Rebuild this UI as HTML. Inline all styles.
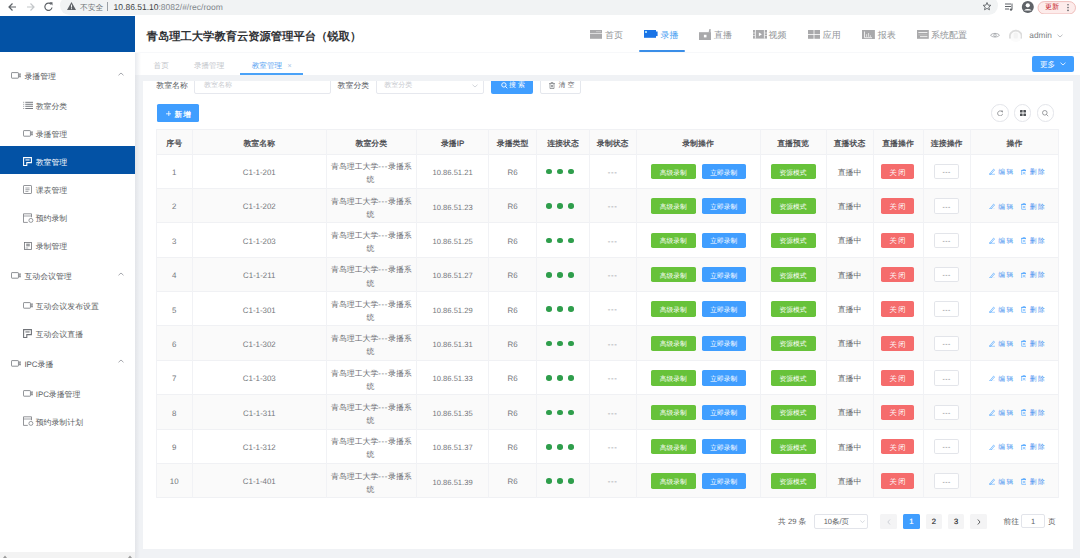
<!DOCTYPE html><html><head><meta charset="utf-8"><style>
*{box-sizing:border-box;margin:0;padding:0}
html,body{width:1080px;height:558px;overflow:hidden;background:#fff;font-family:"Liberation Sans",sans-serif;color:#606266;text-rendering:geometricPrecision}
.a{position:absolute}
.t{position:absolute;white-space:nowrap;line-height:1}
</style></head><body>
<div class="a" style="left:0.00px;top:0.00px;width:1080.00px;height:16.00px;background:#ffffff;"></div>
<div class="a" style="left:0.00px;top:15.50px;width:1080.00px;height:0.80px;background:#dfe1e5;"></div>
<div class="a" style="left:60.00px;top:-4.00px;width:938.00px;height:19.00px;background:#f1f3f4;border-radius:10px;"></div>
<svg class="a" style="left:7.00px;top:1.00px" width="50" height="12" viewBox="0 0 50 12"><path d="M9 6H2M5.5 2.5L2 6l3.5 3.5" stroke="#5f6368" stroke-width="1.2" fill="none"/><path d="M20 6h7M23.5 2.5L27 6l-3.5 3.5" stroke="#c4c7ca" stroke-width="1.2" fill="none"/><path d="M44 3.2A3.6 3.6 0 1 0 45 6.5" stroke="#5f6368" stroke-width="1.2" fill="none"/><path d="M42.3 1.2h3.2v3.2z" fill="#5f6368"/></svg>
<svg class="a" style="left:67.00px;top:2.00px" width="9" height="8" viewBox="0 0 9 8"><path d="M4.5 0L9 8H0z" fill="#5f6368"/><rect x="4" y="2.6" width="1" height="3" fill="#f1f3f4"/><rect x="4" y="6.2" width="1" height="1" fill="#f1f3f4"/></svg>
<div class="t" style="left:80.00px;top:3.83px;font-size:7.8px;color:#6f7377;">不安全</div>
<div class="a" style="left:107.00px;top:2.00px;width:0.80px;height:9.00px;background:#9aa0a6;"></div>
<div class="t" style="left:113.60px;top:3.14px;font-size:8.5px;color:#3c4043;">10.86.51.10<span style="color:#80868b">:8082/#/rec/room</span></div>
<svg class="a" style="left:982.00px;top:1.00px" width="95" height="13" viewBox="0 0 95 13"><path d="M5 1.5l1.1 2.6 2.8.2-2.1 1.8.7 2.7L5 7.4 2.5 8.8l.7-2.7L1.1 4.3l2.8-.2z" stroke="#5f6368" stroke-width="0.9" fill="none"/><path d="M23 3h6M23 5.5h6M23 8h4M30 2.5v6" stroke="#5f6368" stroke-width="1" fill="none"/><circle cx="29" cy="8.6" r="1.2" fill="#5f6368"/><circle cx="45.8" cy="6" r="6" fill="#5f6368"/><circle cx="45.8" cy="4.3" r="2.1" fill="#fff"/><path d="M42 9.5a4.5 3 0 0 1 7.6 0" fill="#fff"/><rect x="56" y="0.6" width="37.5" height="12.4" rx="6.2" fill="#fdeceb" stroke="#e8a7a3" stroke-width="0.7"/><circle cx="86" cy="3.8" r="0.8" fill="#5f6368"/><circle cx="86" cy="6.6" r="0.8" fill="#5f6368"/><circle cx="86" cy="9.4" r="0.8" fill="#5f6368"/></svg>
<div class="t" style="left:1045.00px;top:4.49px;font-size:7px;color:#c5221f;">更新</div>
<div class="a" style="left:0.00px;top:16.20px;width:135.00px;height:36.30px;background:#0352a5;"></div>
<div class="a" style="left:0.00px;top:52.50px;width:135.00px;height:505.50px;background:#fff;"></div>
<div class="a" style="left:0.00px;top:552.30px;width:135.00px;height:5.70px;background:#f3f3f3;"></div>
<svg class="a" style="left:0.00px;top:552.00px" width="135" height="6" viewBox="0 0 135 6"><path d="M3 6l2-2.6L7 6z" fill="#9a9a9a"/><path d="M128 6l2-2.6L132 6z" fill="#9a9a9a"/></svg>
<svg class="a" style="left:10.80px;top:71.80px" width="10.5" height="7" viewBox="0 0 10.5 7"><rect x="0.45" y="0.6" width="7" height="5.6" rx="0.6" fill="none" stroke="#707378" stroke-width="0.8"/><rect x="8.5" y="1.9" width="1.3" height="3" fill="none" stroke="#707378" stroke-width="0.6"/></svg>
<div class="t" style="left:24.40px;top:72.79px;font-size:7.9px;color:#55585d;">录播管理</div>
<svg class="a" style="left:117.50px;top:71.50px" width="6" height="4" viewBox="0 0 6 4"><path d="M0.5 3.3L3 1l2.5 2.3" fill="none" stroke="#909399" stroke-width="0.8"/></svg>
<svg class="a" style="left:22.80px;top:100.95px" width="10.5" height="9" viewBox="0 0 10.5 9"><path d="M0 1.3h1.2M0 3.3h1.2M0 5.3h1.2M0 7.5h1.2" stroke="#707378" stroke-width="0.6"/><path d="M2.3 1.3h8M2.3 3.3h8M2.3 5.3h8M2.3 7.5h8" stroke="#707378" stroke-width="0.95"/></svg>
<div class="t" style="left:35.70px;top:102.84px;font-size:7.9px;color:#5c5f64;">教室分类</div>
<svg class="a" style="left:22.80px;top:129.95px" width="10.5" height="7" viewBox="0 0 10.5 7"><rect x="0.45" y="0.6" width="7" height="5.6" rx="0.6" fill="none" stroke="#707378" stroke-width="0.8"/><rect x="8.5" y="1.9" width="1.3" height="3" fill="none" stroke="#707378" stroke-width="0.6"/></svg>
<div class="t" style="left:35.70px;top:130.94px;font-size:7.9px;color:#5c5f64;">录播管理</div>
<div class="a" style="left:0.00px;top:145.60px;width:135.00px;height:28.10px;background:#0352a5;"></div>
<svg class="a" style="left:22.80px;top:157.15px" width="9" height="9" viewBox="0 0 9 9"><path d="M0.6 0.6h7.8v5h-4.6v3H0.6z" fill="none" stroke="#ffffff" stroke-width="1.1"/><rect x="2.4" y="2.4" width="4.2" height="1.1" fill="#ffffff"/></svg>
<div class="t" style="left:35.70px;top:159.04px;font-size:7.9px;color:#ffffff;">教室管理</div>
<svg class="a" style="left:22.80px;top:185.25px" width="9" height="9" viewBox="0 0 9 9"><rect x="0.5" y="0.5" width="8" height="8" rx="0.6" fill="none" stroke="#707378" stroke-width="0.75"/><path d="M2.4 3h4.2M2.4 4.7h4.2M2.4 6.4h3" stroke="#707378" stroke-width="0.65"/></svg>
<div class="t" style="left:35.70px;top:187.14px;font-size:7.9px;color:#5c5f64;">课表管理</div>
<svg class="a" style="left:22.80px;top:212.85px" width="11" height="10" viewBox="0 0 11 10"><path d="M4.8 9.4H0.5v-8.6h8v3.4" fill="none" stroke="#707378" stroke-width="0.75"/><path d="M0.5 3h8" stroke="#707378" stroke-width="0.65"/><circle cx="7.9" cy="7.4" r="2" fill="none" stroke="#707378" stroke-width="0.7"/></svg>
<div class="t" style="left:35.70px;top:215.24px;font-size:7.9px;color:#5c5f64;">预约录制</div>
<svg class="a" style="left:23.60px;top:241.75px" width="8" height="8" viewBox="0 0 8 8"><rect x="0.45" y="0.45" width="7.1" height="7.1" fill="none" stroke="#707378" stroke-width="0.8"/><rect x="2.2" y="1.6" width="3.6" height="2.8" fill="#707378" opacity="0.7"/><path d="M1.6 6h2.6" stroke="#707378" stroke-width="0.6"/></svg>
<div class="t" style="left:35.70px;top:243.34px;font-size:7.9px;color:#5c5f64;">录制管理</div>
<svg class="a" style="left:10.80px;top:271.90px" width="10.5" height="7" viewBox="0 0 10.5 7"><rect x="0.45" y="0.6" width="7" height="5.6" rx="0.6" fill="none" stroke="#707378" stroke-width="0.8"/><rect x="8.5" y="1.9" width="1.3" height="3" fill="none" stroke="#707378" stroke-width="0.6"/></svg>
<div class="t" style="left:24.40px;top:272.89px;font-size:7.9px;color:#55585d;">互动会议管理</div>
<svg class="a" style="left:117.50px;top:271.60px" width="6" height="4" viewBox="0 0 6 4"><path d="M0.5 3.3L3 1l2.5 2.3" fill="none" stroke="#909399" stroke-width="0.8"/></svg>
<svg class="a" style="left:22.80px;top:301.95px" width="10.5" height="7" viewBox="0 0 10.5 7"><rect x="0.45" y="0.6" width="7" height="5.6" rx="0.6" fill="none" stroke="#707378" stroke-width="0.8"/><rect x="8.5" y="1.9" width="1.3" height="3" fill="none" stroke="#707378" stroke-width="0.6"/></svg>
<div class="t" style="left:35.70px;top:302.94px;font-size:7.9px;color:#5c5f64;">互动会议发布设置</div>
<svg class="a" style="left:22.80px;top:329.15px" width="9" height="9" viewBox="0 0 9 9"><path d="M0.6 0.6h7.8v5h-4.6v3H0.6z" fill="none" stroke="#707378" stroke-width="1.1"/><rect x="2.4" y="2.4" width="4.2" height="1.1" fill="#707378"/></svg>
<div class="t" style="left:35.70px;top:331.04px;font-size:7.9px;color:#5c5f64;">互动会议直播</div>
<svg class="a" style="left:10.80px;top:359.60px" width="10.5" height="7" viewBox="0 0 10.5 7"><rect x="0.45" y="0.6" width="7" height="5.6" rx="0.6" fill="none" stroke="#707378" stroke-width="0.8"/><rect x="8.5" y="1.9" width="1.3" height="3" fill="none" stroke="#707378" stroke-width="0.6"/></svg>
<div class="t" style="left:24.40px;top:360.59px;font-size:7.9px;color:#55585d;">IPC录播</div>
<svg class="a" style="left:117.50px;top:359.30px" width="6" height="4" viewBox="0 0 6 4"><path d="M0.5 3.3L3 1l2.5 2.3" fill="none" stroke="#909399" stroke-width="0.8"/></svg>
<svg class="a" style="left:22.80px;top:389.65px" width="10.5" height="7" viewBox="0 0 10.5 7"><rect x="0.45" y="0.6" width="7" height="5.6" rx="0.6" fill="none" stroke="#707378" stroke-width="0.8"/><rect x="8.5" y="1.9" width="1.3" height="3" fill="none" stroke="#707378" stroke-width="0.6"/></svg>
<div class="t" style="left:35.70px;top:390.64px;font-size:7.9px;color:#5c5f64;">IPC录播管理</div>
<svg class="a" style="left:22.80px;top:416.35px" width="11" height="10" viewBox="0 0 11 10"><path d="M4.8 9.4H0.5v-8.6h8v3.4" fill="none" stroke="#707378" stroke-width="0.75"/><path d="M0.5 3h8" stroke="#707378" stroke-width="0.65"/><circle cx="7.9" cy="7.4" r="2" fill="none" stroke="#707378" stroke-width="0.7"/></svg>
<div class="t" style="left:35.70px;top:418.74px;font-size:7.9px;color:#5c5f64;">预约录制计划</div>
<div class="a" style="left:135.00px;top:16.20px;width:945.00px;height:36.30px;background:#fff;"></div>
<div class="a" style="left:135.00px;top:52.20px;width:945.00px;height:0.80px;background:#f7f8fa;"></div>
<div class="t" style="left:146.60px;top:31.87px;font-size:11.3px;color:#2f3134;font-weight:bold;">青岛理工大学教育云资源管理平台（锐取）</div>
<svg class="a" style="left:590.00px;top:30.00px" width="12" height="8.8" viewBox="0 0 12 8.8"><rect width="12" height="8.8" fill="#a9a9ab"/><rect y="3" width="12" height="0.7" fill="#f4f4f4"/><rect x="6" y="1.2" width="5" height="0.9" fill="#c9c9c9"/></svg>
<div class="t" style="left:605.00px;top:30.83px;font-size:9px;color:#939699;">首页</div>
<svg class="a" style="left:644.00px;top:30.00px" width="13.6" height="7.8" viewBox="0 0 13.6 7.8"><rect width="12" height="7.8" fill="#1a74e6"/><rect x="11.8" y="1.5" width="1.8" height="4.6" fill="#1a74e6"/><rect x="1.1" y="1.1" width="1.8" height="1.8" fill="#bfefff"/></svg>
<div class="t" style="left:660.60px;top:30.83px;font-size:9px;color:#4b9ff2;">录播</div>
<svg class="a" style="left:699.00px;top:28.50px" width="12" height="11.2" viewBox="0 0 12 11.2"><rect x="0" y="3.2" width="12" height="8" fill="#a9a9ab"/><path d="M9.6 3.4L10.4 0h1.2v3.4z" fill="#a9a9ab"/><rect x="4.9" y="5.8" width="2.6" height="2.6" fill="#fff"/></svg>
<div class="t" style="left:714.00px;top:30.83px;font-size:9px;color:#939699;">直播</div>
<svg class="a" style="left:752.90px;top:30.00px" width="14.3" height="8.6" viewBox="0 0 14.3 8.6"><rect width="14.3" height="8.6" fill="#a9a9ab"/><path d="M2.4 0v8.6M11.4 0v8.6" stroke="#fff" stroke-width="0.8"/><path d="M0 3h2.2M0 5.5h2.2M11.6 3h2.7M11.6 5.5h2.7" stroke="#fff" stroke-width="0.6"/><path d="M5.9 2.4l3 1.9-3 1.9z" fill="#fff"/></svg>
<div class="t" style="left:768.60px;top:30.83px;font-size:9px;color:#939699;">视频</div>
<svg class="a" style="left:808.30px;top:30.00px" width="12" height="8.8" viewBox="0 0 12 8.8"><rect width="5.6" height="4" fill="#a9a9ab"/><rect x="6.4" width="5.6" height="4" fill="#a9a9ab"/><rect y="4.8" width="5.6" height="4" fill="#a9a9ab"/><rect x="6.4" y="4.8" width="5.6" height="4" fill="#a9a9ab"/></svg>
<div class="t" style="left:822.80px;top:30.83px;font-size:9px;color:#939699;">应用</div>
<svg class="a" style="left:862.00px;top:29.70px" width="12.9" height="9" viewBox="0 0 12.9 9"><rect width="12.9" height="9" fill="#a9a9ab"/><path d="M2.5 1.5v6.2h7.5" stroke="#fff" stroke-width="0.8" fill="none"/><path d="M4.6 6.8V4.2M6.6 6.8V3M8.4 6.8V5.3" stroke="#f2f2f2" stroke-width="0.8"/></svg>
<div class="t" style="left:877.80px;top:30.83px;font-size:9px;color:#939699;">报表</div>
<svg class="a" style="left:917.00px;top:30.00px" width="11.8" height="8.8" viewBox="0 0 11.8 8.8"><rect width="11.8" height="8.8" fill="#a9a9ab"/><rect x="1.4" y="2.2" width="9" height="0.8" fill="#fff"/><rect x="3" y="6.3" width="7.4" height="0.8" fill="#fff"/><rect x="1.4" y="3.9" width="9" height="1.6" fill="#b9b9b9"/></svg>
<div class="t" style="left:931.00px;top:30.83px;font-size:9px;color:#939699;">系统配置</div>
<div class="a" style="left:639.00px;top:50.00px;width:46.00px;height:2.00px;background:#3a8ee8;border-radius:1px;"></div>
<svg class="a" style="left:989.80px;top:31.50px" width="10" height="6.5" viewBox="0 0 10 6.5"><path d="M0.5 3.2C2 0.8 8 0.8 9.5 3.2 8 5.6 2 5.6 0.5 3.2z" fill="none" stroke="#9a9da2" stroke-width="0.8"/><circle cx="5" cy="3.2" r="1.3" fill="none" stroke="#9a9da2" stroke-width="0.7"/></svg>
<svg class="a" style="left:1008.70px;top:28.60px" width="13.5" height="13.5" viewBox="0 0 13.5 13.5"><circle cx="6.75" cy="6.75" r="6.2" fill="#fbfbfb"/><path d="M1.2 9.5A5.9 5.9 0 1 1 12.3 9.5" fill="none" stroke="#dcdcdc" stroke-width="1.8"/><rect x="4.6" y="3.5" width="4.3" height="6" rx="1.5" fill="#f3f3f3"/></svg>
<div class="t" style="left:1029.30px;top:31.11px;font-size:8.3px;color:#7c7f84;">admin</div>
<svg class="a" style="left:1056.80px;top:33.60px" width="6" height="4" viewBox="0 0 6 4"><path d="M0.5 0.7L3 3l2.5-2.3" fill="none" stroke="#a0a3a8" stroke-width="0.7"/></svg>
<div class="a" style="left:135.00px;top:53.00px;width:945.00px;height:22.00px;background:#fff;"></div>
<div class="a" style="left:135.00px;top:53.00px;width:6.00px;height:22.00px;background:linear-gradient(90deg,#e9ebef,#f4f5f7 50%,#fff);"></div>
<div class="t" style="left:153.60px;top:61.69px;font-size:7.6px;color:#c3c6cb;">首页</div>
<div class="t" style="left:193.90px;top:61.69px;font-size:7.6px;color:#c3c6cb;">录播管理</div>
<div class="t" style="left:251.70px;top:61.69px;font-size:7.6px;color:#5ea6f2;">教室管理</div>
<div class="t" style="left:287.40px;top:63.28px;font-size:7px;color:#a9c3e6;">×</div>
<div class="a" style="left:240.00px;top:73.40px;width:63.00px;height:1.60px;background:#4aa2f8;"></div>
<div class="a" style="left:1032.00px;top:56.00px;width:41.80px;height:15.80px;background:#409eff;border-radius:2px;"></div>
<div class="t" style="left:1040.00px;top:61.49px;font-size:7.6px;color:#ffffff;">更多</div>
<svg class="a" style="left:1059.50px;top:62.30px" width="6" height="4" viewBox="0 0 6 4"><path d="M0.5 0.7L3 3l2.5-2.3" fill="none" stroke="#fff" stroke-width="0.8"/></svg>
<div class="a" style="left:135.00px;top:75.00px;width:945.00px;height:483.00px;background:#f0f2f5;"></div>
<div class="a" style="left:135.00px;top:75.00px;width:5.00px;height:483.00px;background:linear-gradient(90deg,#e3e5e9,#f0f2f5);"></div>
<div class="a" style="left:142.50px;top:80.60px;width:930.50px;height:468.00px;background:#fff;"></div>
<div class="a" style="left:142.5px;top:80.8px;width:931px;height:467px;overflow:hidden">
<div class="t" style="left:13.80px;top:0.99px;font-size:7.9px;color:#55585d;">教室名称</div>
<div class="a" style="left:51.50px;top:-4.80px;width:137.20px;height:17.50px;background:#fff;border:1px solid #e6e8ee;border-radius:2px;"></div>
<div class="t" style="left:61.50px;top:1.69px;font-size:7.0px;color:#c8cacf;">教室名称</div>
<div class="t" style="left:195.10px;top:0.99px;font-size:7.9px;color:#55585d;">教室分类</div>
<div class="a" style="left:233.20px;top:-4.80px;width:108.30px;height:17.50px;background:#fff;border:1px solid #e6e8ee;border-radius:2px;"></div>
<div class="t" style="left:241.80px;top:1.69px;font-size:7.0px;color:#c8cacf;">教室分类</div>
<svg class="a" style="left:329.80px;top:2.80px" width="6" height="4" viewBox="0 0 6 4"><path d="M0.5 0.7L3 3l2.5-2.3" fill="none" stroke="#c0c4cc" stroke-width="0.7"/></svg>
<div class="a" style="left:348.00px;top:-4.60px;width:42.30px;height:17.80px;background:#409eff;border-radius:2px;"></div>
<svg class="a" style="left:358.00px;top:1.20px" width="7" height="7" viewBox="0 0 7 7"><circle cx="2.9" cy="2.9" r="2.2" fill="none" stroke="#fff" stroke-width="0.9"/><path d="M4.5 4.5L6.3 6.3" stroke="#fff" stroke-width="0.9"/></svg>
<div class="t" style="left:366.50px;top:2.42px;font-size:6.9px;color:#ffffff;letter-spacing:2.2px;">搜索</div>
<div class="a" style="left:397.50px;top:-4.60px;width:41.00px;height:17.80px;background:#fff;border:1px solid #e4e7ed;border-radius:2px;"></div>
<svg class="a" style="left:406.80px;top:1.20px" width="6" height="7" viewBox="0 0 6 7"><path d="M0 1.6h6M2 1.6V0.6h2v1M1 1.6v4.9h4V1.6M2.5 3v2.3M3.5 3v2.3" fill="none" stroke="#6c6f74" stroke-width="0.65"/></svg>
<div class="t" style="left:416.00px;top:2.42px;font-size:6.9px;color:#606266;letter-spacing:2.2px;">清空</div>
<div class="a" style="left:14.30px;top:23.50px;width:42.00px;height:17.80px;background:#409eff;border-radius:1.6px;"></div>
<svg class="a" style="left:23.10px;top:30.10px" width="5.6" height="5.6" viewBox="0 0 5.6 5.6"><path d="M2.8 0v5.6M0 2.8h5.6" stroke="#fff" stroke-width="0.8"/></svg>
<div class="t" style="left:31.90px;top:30.29px;font-size:7.6px;color:#ffffff;font-weight:bold;letter-spacing:1.2px;">新增</div>
<div class="a" style="left:848.90px;top:23.70px;width:17.40px;height:17.40px;background:#fff;border:1px solid #e3e5ea;border-radius:50%;"></div>
<svg class="a" style="left:854.40px;top:29.20px" width="6.4" height="6.4" viewBox="0 0 6.4 6.4"><path d="M5.3 2.2A2.5 2.5 0 1 0 5.6 3.8" fill="none" stroke="#6a6d72" stroke-width="0.65"/><path d="M4.2 0.9h1.4v1.4" fill="none" stroke="#6a6d72" stroke-width="0.65"/></svg>
<div class="a" style="left:871.30px;top:23.70px;width:17.40px;height:17.40px;background:#fff;border:1px solid #e3e5ea;border-radius:50%;"></div>
<svg class="a" style="left:877.00px;top:29.40px" width="6" height="6" viewBox="0 0 6 6"><rect width="2.6" height="2.6" rx="0.5" fill="#4f5256"/><rect x="3.4" width="2.6" height="2.6" rx="0.5" fill="#4f5256"/><rect y="3.4" width="2.6" height="2.6" rx="0.5" fill="#4f5256"/><rect x="3.4" y="3.4" width="2.6" height="2.6" rx="0.5" fill="#4f5256"/></svg>
<div class="a" style="left:894.00px;top:23.70px;width:17.40px;height:17.40px;background:#fff;border:1px solid #e3e5ea;border-radius:50%;"></div>
<svg class="a" style="left:899.70px;top:29.40px" width="6.5" height="6.5" viewBox="0 0 6.5 6.5"><circle cx="2.8" cy="2.8" r="2.3" fill="none" stroke="#6a6d72" stroke-width="0.65"/><path d="M4.5 4.5L6.2 6.2" stroke="#6a6d72" stroke-width="0.65"/></svg>
<div class="a" style="left:13.50px;top:48.70px;width:902.50px;height:24.60px;background:#fafafa;"></div>
<div class="a" style="left:13.50px;top:73.30px;width:902.50px;height:34.38px;background:#ffffff;"></div>
<div class="a" style="left:13.50px;top:107.68px;width:902.50px;height:34.38px;background:#fafafa;"></div>
<div class="a" style="left:13.50px;top:142.06px;width:902.50px;height:34.38px;background:#ffffff;"></div>
<div class="a" style="left:13.50px;top:176.44px;width:902.50px;height:34.38px;background:#fafafa;"></div>
<div class="a" style="left:13.50px;top:210.82px;width:902.50px;height:34.38px;background:#ffffff;"></div>
<div class="a" style="left:13.50px;top:245.20px;width:902.50px;height:34.38px;background:#fafafa;"></div>
<div class="a" style="left:13.50px;top:279.58px;width:902.50px;height:34.38px;background:#ffffff;"></div>
<div class="a" style="left:13.50px;top:313.96px;width:902.50px;height:34.38px;background:#fafafa;"></div>
<div class="a" style="left:13.50px;top:348.34px;width:902.50px;height:34.38px;background:#ffffff;"></div>
<div class="a" style="left:13.50px;top:382.72px;width:902.50px;height:34.38px;background:#fafafa;"></div>
<div class="a" style="left:13.50px;top:48.20px;width:902.50px;height:1.00px;background:#f0f1f4;"></div>
<div class="a" style="left:13.50px;top:72.80px;width:902.50px;height:1.00px;background:#f0f1f4;"></div>
<div class="a" style="left:13.50px;top:107.18px;width:902.50px;height:1.00px;background:#f0f1f4;"></div>
<div class="a" style="left:13.50px;top:141.56px;width:902.50px;height:1.00px;background:#f0f1f4;"></div>
<div class="a" style="left:13.50px;top:175.94px;width:902.50px;height:1.00px;background:#f0f1f4;"></div>
<div class="a" style="left:13.50px;top:210.32px;width:902.50px;height:1.00px;background:#f0f1f4;"></div>
<div class="a" style="left:13.50px;top:244.70px;width:902.50px;height:1.00px;background:#f0f1f4;"></div>
<div class="a" style="left:13.50px;top:279.08px;width:902.50px;height:1.00px;background:#f0f1f4;"></div>
<div class="a" style="left:13.50px;top:313.46px;width:902.50px;height:1.00px;background:#f0f1f4;"></div>
<div class="a" style="left:13.50px;top:347.84px;width:902.50px;height:1.00px;background:#f0f1f4;"></div>
<div class="a" style="left:13.50px;top:382.22px;width:902.50px;height:1.00px;background:#f0f1f4;"></div>
<div class="a" style="left:13.50px;top:416.60px;width:902.50px;height:1.00px;background:#f0f1f4;"></div>
<div class="a" style="left:13.00px;top:48.70px;width:1.00px;height:368.40px;background:#f1f2f5;"></div>
<div class="a" style="left:49.50px;top:48.70px;width:1.00px;height:368.40px;background:#f1f2f5;"></div>
<div class="a" style="left:183.00px;top:48.70px;width:1.00px;height:368.40px;background:#f1f2f5;"></div>
<div class="a" style="left:273.70px;top:48.70px;width:1.00px;height:368.40px;background:#f1f2f5;"></div>
<div class="a" style="left:345.50px;top:48.70px;width:1.00px;height:368.40px;background:#f1f2f5;"></div>
<div class="a" style="left:393.70px;top:48.70px;width:1.00px;height:368.40px;background:#f1f2f5;"></div>
<div class="a" style="left:446.30px;top:48.70px;width:1.00px;height:368.40px;background:#f1f2f5;"></div>
<div class="a" style="left:493.00px;top:48.70px;width:1.00px;height:368.40px;background:#f1f2f5;"></div>
<div class="a" style="left:617.00px;top:48.70px;width:1.00px;height:368.40px;background:#f1f2f5;"></div>
<div class="a" style="left:683.00px;top:48.70px;width:1.00px;height:368.40px;background:#f1f2f5;"></div>
<div class="a" style="left:730.00px;top:48.70px;width:1.00px;height:368.40px;background:#f1f2f5;"></div>
<div class="a" style="left:780.00px;top:48.70px;width:1.00px;height:368.40px;background:#f1f2f5;"></div>
<div class="a" style="left:827.30px;top:48.70px;width:1.00px;height:368.40px;background:#f1f2f5;"></div>
<div class="a" style="left:915.50px;top:48.70px;width:1.00px;height:368.40px;background:#f1f2f5;"></div>
<div class="t" style="left:13.50px;top:58.99px;font-size:7.9px;color:#3f4247;width:36.50px;text-align:center;font-weight:500;-webkit-text-stroke:0.25px #3f4247;">序号</div>
<div class="t" style="left:50.00px;top:58.99px;font-size:7.9px;color:#3f4247;width:133.50px;text-align:center;font-weight:500;-webkit-text-stroke:0.25px #3f4247;">教室名称</div>
<div class="t" style="left:183.50px;top:58.99px;font-size:7.9px;color:#3f4247;width:90.70px;text-align:center;font-weight:500;-webkit-text-stroke:0.25px #3f4247;">教室分类</div>
<div class="t" style="left:274.20px;top:58.99px;font-size:7.9px;color:#3f4247;width:71.80px;text-align:center;font-weight:500;-webkit-text-stroke:0.25px #3f4247;">录播IP</div>
<div class="t" style="left:346.00px;top:58.99px;font-size:7.9px;color:#3f4247;width:48.20px;text-align:center;font-weight:500;-webkit-text-stroke:0.25px #3f4247;">录播类型</div>
<div class="t" style="left:394.20px;top:58.99px;font-size:7.9px;color:#3f4247;width:52.60px;text-align:center;font-weight:500;-webkit-text-stroke:0.25px #3f4247;">连接状态</div>
<div class="t" style="left:446.80px;top:58.99px;font-size:7.9px;color:#3f4247;width:46.70px;text-align:center;font-weight:500;-webkit-text-stroke:0.25px #3f4247;">录制状态</div>
<div class="t" style="left:493.50px;top:58.99px;font-size:7.9px;color:#3f4247;width:124.00px;text-align:center;font-weight:500;-webkit-text-stroke:0.25px #3f4247;">录制操作</div>
<div class="t" style="left:617.50px;top:58.99px;font-size:7.9px;color:#3f4247;width:66.00px;text-align:center;font-weight:500;-webkit-text-stroke:0.25px #3f4247;">直播预览</div>
<div class="t" style="left:683.50px;top:58.99px;font-size:7.9px;color:#3f4247;width:47.00px;text-align:center;font-weight:500;-webkit-text-stroke:0.25px #3f4247;">直播状态</div>
<div class="t" style="left:730.50px;top:58.99px;font-size:7.9px;color:#3f4247;width:50.00px;text-align:center;font-weight:500;-webkit-text-stroke:0.25px #3f4247;">直播操作</div>
<div class="t" style="left:780.50px;top:58.99px;font-size:7.9px;color:#3f4247;width:47.30px;text-align:center;font-weight:500;-webkit-text-stroke:0.25px #3f4247;">连接操作</div>
<div class="t" style="left:827.80px;top:58.99px;font-size:7.9px;color:#3f4247;width:88.20px;text-align:center;font-weight:500;-webkit-text-stroke:0.25px #3f4247;">操作</div>
<div class="t" style="left:13.50px;top:88.25px;font-size:7.9px;color:#74777c;width:36.50px;text-align:center;">1</div>
<div class="t" style="left:50.00px;top:88.25px;font-size:7.9px;color:#74777c;width:133.50px;text-align:center;">C1-1-201</div>
<div class="a" style="left:183.50px;top:79.43px;width:90.70px;text-align:center;font-size:7.9px;line-height:13.2px;color:#6a6d72">青岛理工大学<span style="letter-spacing:0.6px">---</span>录播系<br><span style="position:relative;left:-1px">统</span></div>
<div class="t" style="left:274.20px;top:88.35px;font-size:7.6px;color:#74777c;width:71.80px;text-align:center;">10.86.51.21</div>
<div class="t" style="left:346.00px;top:88.25px;font-size:7.9px;color:#74777c;width:48.20px;text-align:center;">R6</div>
<div class="a" style="left:403.60px;top:88.09px;width:5.60px;height:5.60px;background:#2f9e4c;border-radius:50%;"></div>
<div class="a" style="left:414.70px;top:88.09px;width:5.60px;height:5.60px;background:#2f9e4c;border-radius:50%;"></div>
<div class="a" style="left:425.80px;top:88.09px;width:5.60px;height:5.60px;background:#2f9e4c;border-radius:50%;"></div>
<div class="t" style="left:446.80px;top:88.05px;font-size:7.9px;color:#8d9095;width:46.70px;text-align:center;letter-spacing:0.6px;">---</div>
<div class="a" style="left:508.60px;top:83.09px;width:44.50px;height:15.40px;background:#67c23a;border-radius:1.8px;"></div>
<div class="t" style="left:508.60px;top:89.76px;font-size:6.75px;color:#fff;width:44.50px;text-align:center;">高级录制</div>
<div class="a" style="left:559.10px;top:83.09px;width:44.40px;height:15.40px;background:#409eff;border-radius:1.8px;"></div>
<div class="t" style="left:559.10px;top:89.76px;font-size:6.75px;color:#fff;width:44.40px;text-align:center;">立即录制</div>
<div class="a" style="left:628.10px;top:83.09px;width:45.00px;height:15.40px;background:#67c23a;border-radius:1.8px;"></div>
<div class="t" style="left:628.10px;top:89.76px;font-size:6.75px;color:#fff;width:45.00px;text-align:center;">资源模式</div>
<div class="t" style="left:683.50px;top:87.78px;font-size:7.9px;color:#606266;width:47.00px;text-align:center;">直播中</div>
<div class="a" style="left:738.30px;top:83.09px;width:33.40px;height:15.40px;background:#f56c6c;border-radius:1.8px;"></div>
<div class="t" style="left:738.30px;top:87.88px;font-size:7.3px;color:#fff;width:33.40px;text-align:center;letter-spacing:1.5px;text-indent:1.5px;">关闭</div>
<div class="a" style="left:791.10px;top:83.09px;width:25.80px;height:15.40px;background:#fff;border-radius:1.8px;border:1px solid #e3e5ea;"></div>
<div class="t" style="left:791.10px;top:89.56px;font-size:6.75px;color:#6e7176;width:25.80px;text-align:center;letter-spacing:0.5px;text-indent:0.5px;">---</div>
<svg class="a" style="left:846.30px;top:87.69px" width="6" height="6.6" viewBox="0 0 6 6.6"><path d="M1 5.4L4.6 1.1l1 0.8L2 6.1H0.6z" fill="none" stroke="#409eff" stroke-width="0.6"/><path d="M0 6.3h6" stroke="#409eff" stroke-width="0.5"/></svg>
<div class="t" style="left:855.70px;top:89.46px;font-size:6.75px;color:#4a94f0;letter-spacing:1.55px;">编辑</div>
<svg class="a" style="left:878.30px;top:87.79px" width="5.6" height="6.6" viewBox="0 0 5.6 6.6"><rect x="0.8" y="1.6" width="4.4" height="4.6" fill="none" stroke="#409eff" stroke-width="0.6"/><path d="M0 1.4h6M2 1.4V0.4h2v1M2.4 3v2M3.6 3v2" fill="none" stroke="#409eff" stroke-width="0.55"/></svg>
<div class="t" style="left:887.30px;top:89.46px;font-size:6.75px;color:#4a94f0;letter-spacing:1.55px;">删除</div>
<div class="t" style="left:13.50px;top:122.63px;font-size:7.9px;color:#74777c;width:36.50px;text-align:center;">2</div>
<div class="t" style="left:50.00px;top:122.63px;font-size:7.9px;color:#74777c;width:133.50px;text-align:center;">C1-1-202</div>
<div class="a" style="left:183.50px;top:113.81px;width:90.70px;text-align:center;font-size:7.9px;line-height:13.2px;color:#6a6d72">青岛理工大学<span style="letter-spacing:0.6px">---</span>录播系<br><span style="position:relative;left:-1px">统</span></div>
<div class="t" style="left:274.20px;top:122.73px;font-size:7.6px;color:#74777c;width:71.80px;text-align:center;">10.86.51.23</div>
<div class="t" style="left:346.00px;top:122.63px;font-size:7.9px;color:#74777c;width:48.20px;text-align:center;">R6</div>
<div class="a" style="left:403.60px;top:122.47px;width:5.60px;height:5.60px;background:#2f9e4c;border-radius:50%;"></div>
<div class="a" style="left:414.70px;top:122.47px;width:5.60px;height:5.60px;background:#2f9e4c;border-radius:50%;"></div>
<div class="a" style="left:425.80px;top:122.47px;width:5.60px;height:5.60px;background:#2f9e4c;border-radius:50%;"></div>
<div class="t" style="left:446.80px;top:122.43px;font-size:7.9px;color:#8d9095;width:46.70px;text-align:center;letter-spacing:0.6px;">---</div>
<div class="a" style="left:508.60px;top:117.47px;width:44.50px;height:15.40px;background:#67c23a;border-radius:1.8px;"></div>
<div class="t" style="left:508.60px;top:124.14px;font-size:6.75px;color:#fff;width:44.50px;text-align:center;">高级录制</div>
<div class="a" style="left:559.10px;top:117.47px;width:44.40px;height:15.40px;background:#409eff;border-radius:1.8px;"></div>
<div class="t" style="left:559.10px;top:124.14px;font-size:6.75px;color:#fff;width:44.40px;text-align:center;">立即录制</div>
<div class="a" style="left:628.10px;top:117.47px;width:45.00px;height:15.40px;background:#67c23a;border-radius:1.8px;"></div>
<div class="t" style="left:628.10px;top:124.14px;font-size:6.75px;color:#fff;width:45.00px;text-align:center;">资源模式</div>
<div class="t" style="left:683.50px;top:122.16px;font-size:7.9px;color:#606266;width:47.00px;text-align:center;">直播中</div>
<div class="a" style="left:738.30px;top:117.47px;width:33.40px;height:15.40px;background:#f56c6c;border-radius:1.8px;"></div>
<div class="t" style="left:738.30px;top:122.26px;font-size:7.3px;color:#fff;width:33.40px;text-align:center;letter-spacing:1.5px;text-indent:1.5px;">关闭</div>
<div class="a" style="left:791.10px;top:117.47px;width:25.80px;height:15.40px;background:#fff;border-radius:1.8px;border:1px solid #e3e5ea;"></div>
<div class="t" style="left:791.10px;top:123.94px;font-size:6.75px;color:#6e7176;width:25.80px;text-align:center;letter-spacing:0.5px;text-indent:0.5px;">---</div>
<svg class="a" style="left:846.30px;top:122.07px" width="6" height="6.6" viewBox="0 0 6 6.6"><path d="M1 5.4L4.6 1.1l1 0.8L2 6.1H0.6z" fill="none" stroke="#409eff" stroke-width="0.6"/><path d="M0 6.3h6" stroke="#409eff" stroke-width="0.5"/></svg>
<div class="t" style="left:855.70px;top:123.84px;font-size:6.75px;color:#4a94f0;letter-spacing:1.55px;">编辑</div>
<svg class="a" style="left:878.30px;top:122.17px" width="5.6" height="6.6" viewBox="0 0 5.6 6.6"><rect x="0.8" y="1.6" width="4.4" height="4.6" fill="none" stroke="#409eff" stroke-width="0.6"/><path d="M0 1.4h6M2 1.4V0.4h2v1M2.4 3v2M3.6 3v2" fill="none" stroke="#409eff" stroke-width="0.55"/></svg>
<div class="t" style="left:887.30px;top:123.84px;font-size:6.75px;color:#4a94f0;letter-spacing:1.55px;">删除</div>
<div class="t" style="left:13.50px;top:157.01px;font-size:7.9px;color:#74777c;width:36.50px;text-align:center;">3</div>
<div class="t" style="left:50.00px;top:157.01px;font-size:7.9px;color:#74777c;width:133.50px;text-align:center;">C1-1-203</div>
<div class="a" style="left:183.50px;top:148.19px;width:90.70px;text-align:center;font-size:7.9px;line-height:13.2px;color:#6a6d72">青岛理工大学<span style="letter-spacing:0.6px">---</span>录播系<br><span style="position:relative;left:-1px">统</span></div>
<div class="t" style="left:274.20px;top:157.11px;font-size:7.6px;color:#74777c;width:71.80px;text-align:center;">10.86.51.25</div>
<div class="t" style="left:346.00px;top:157.01px;font-size:7.9px;color:#74777c;width:48.20px;text-align:center;">R6</div>
<div class="a" style="left:403.60px;top:156.85px;width:5.60px;height:5.60px;background:#2f9e4c;border-radius:50%;"></div>
<div class="a" style="left:414.70px;top:156.85px;width:5.60px;height:5.60px;background:#2f9e4c;border-radius:50%;"></div>
<div class="a" style="left:425.80px;top:156.85px;width:5.60px;height:5.60px;background:#2f9e4c;border-radius:50%;"></div>
<div class="t" style="left:446.80px;top:156.81px;font-size:7.9px;color:#8d9095;width:46.70px;text-align:center;letter-spacing:0.6px;">---</div>
<div class="a" style="left:508.60px;top:151.85px;width:44.50px;height:15.40px;background:#67c23a;border-radius:1.8px;"></div>
<div class="t" style="left:508.60px;top:158.52px;font-size:6.75px;color:#fff;width:44.50px;text-align:center;">高级录制</div>
<div class="a" style="left:559.10px;top:151.85px;width:44.40px;height:15.40px;background:#409eff;border-radius:1.8px;"></div>
<div class="t" style="left:559.10px;top:158.52px;font-size:6.75px;color:#fff;width:44.40px;text-align:center;">立即录制</div>
<div class="a" style="left:628.10px;top:151.85px;width:45.00px;height:15.40px;background:#67c23a;border-radius:1.8px;"></div>
<div class="t" style="left:628.10px;top:158.52px;font-size:6.75px;color:#fff;width:45.00px;text-align:center;">资源模式</div>
<div class="t" style="left:683.50px;top:156.54px;font-size:7.9px;color:#606266;width:47.00px;text-align:center;">直播中</div>
<div class="a" style="left:738.30px;top:151.85px;width:33.40px;height:15.40px;background:#f56c6c;border-radius:1.8px;"></div>
<div class="t" style="left:738.30px;top:156.64px;font-size:7.3px;color:#fff;width:33.40px;text-align:center;letter-spacing:1.5px;text-indent:1.5px;">关闭</div>
<div class="a" style="left:791.10px;top:151.85px;width:25.80px;height:15.40px;background:#fff;border-radius:1.8px;border:1px solid #e3e5ea;"></div>
<div class="t" style="left:791.10px;top:158.32px;font-size:6.75px;color:#6e7176;width:25.80px;text-align:center;letter-spacing:0.5px;text-indent:0.5px;">---</div>
<svg class="a" style="left:846.30px;top:156.45px" width="6" height="6.6" viewBox="0 0 6 6.6"><path d="M1 5.4L4.6 1.1l1 0.8L2 6.1H0.6z" fill="none" stroke="#409eff" stroke-width="0.6"/><path d="M0 6.3h6" stroke="#409eff" stroke-width="0.5"/></svg>
<div class="t" style="left:855.70px;top:158.22px;font-size:6.75px;color:#4a94f0;letter-spacing:1.55px;">编辑</div>
<svg class="a" style="left:878.30px;top:156.55px" width="5.6" height="6.6" viewBox="0 0 5.6 6.6"><rect x="0.8" y="1.6" width="4.4" height="4.6" fill="none" stroke="#409eff" stroke-width="0.6"/><path d="M0 1.4h6M2 1.4V0.4h2v1M2.4 3v2M3.6 3v2" fill="none" stroke="#409eff" stroke-width="0.55"/></svg>
<div class="t" style="left:887.30px;top:158.22px;font-size:6.75px;color:#4a94f0;letter-spacing:1.55px;">删除</div>
<div class="t" style="left:13.50px;top:191.39px;font-size:7.9px;color:#74777c;width:36.50px;text-align:center;">4</div>
<div class="t" style="left:50.00px;top:191.39px;font-size:7.9px;color:#74777c;width:133.50px;text-align:center;">C1-1-211</div>
<div class="a" style="left:183.50px;top:182.57px;width:90.70px;text-align:center;font-size:7.9px;line-height:13.2px;color:#6a6d72">青岛理工大学<span style="letter-spacing:0.6px">---</span>录播系<br><span style="position:relative;left:-1px">统</span></div>
<div class="t" style="left:274.20px;top:191.49px;font-size:7.6px;color:#74777c;width:71.80px;text-align:center;">10.86.51.27</div>
<div class="t" style="left:346.00px;top:191.39px;font-size:7.9px;color:#74777c;width:48.20px;text-align:center;">R6</div>
<div class="a" style="left:403.60px;top:191.23px;width:5.60px;height:5.60px;background:#2f9e4c;border-radius:50%;"></div>
<div class="a" style="left:414.70px;top:191.23px;width:5.60px;height:5.60px;background:#2f9e4c;border-radius:50%;"></div>
<div class="a" style="left:425.80px;top:191.23px;width:5.60px;height:5.60px;background:#2f9e4c;border-radius:50%;"></div>
<div class="t" style="left:446.80px;top:191.19px;font-size:7.9px;color:#8d9095;width:46.70px;text-align:center;letter-spacing:0.6px;">---</div>
<div class="a" style="left:508.60px;top:186.23px;width:44.50px;height:15.40px;background:#67c23a;border-radius:1.8px;"></div>
<div class="t" style="left:508.60px;top:192.90px;font-size:6.75px;color:#fff;width:44.50px;text-align:center;">高级录制</div>
<div class="a" style="left:559.10px;top:186.23px;width:44.40px;height:15.40px;background:#409eff;border-radius:1.8px;"></div>
<div class="t" style="left:559.10px;top:192.90px;font-size:6.75px;color:#fff;width:44.40px;text-align:center;">立即录制</div>
<div class="a" style="left:628.10px;top:186.23px;width:45.00px;height:15.40px;background:#67c23a;border-radius:1.8px;"></div>
<div class="t" style="left:628.10px;top:192.90px;font-size:6.75px;color:#fff;width:45.00px;text-align:center;">资源模式</div>
<div class="t" style="left:683.50px;top:190.92px;font-size:7.9px;color:#606266;width:47.00px;text-align:center;">直播中</div>
<div class="a" style="left:738.30px;top:186.23px;width:33.40px;height:15.40px;background:#f56c6c;border-radius:1.8px;"></div>
<div class="t" style="left:738.30px;top:191.02px;font-size:7.3px;color:#fff;width:33.40px;text-align:center;letter-spacing:1.5px;text-indent:1.5px;">关闭</div>
<div class="a" style="left:791.10px;top:186.23px;width:25.80px;height:15.40px;background:#fff;border-radius:1.8px;border:1px solid #e3e5ea;"></div>
<div class="t" style="left:791.10px;top:192.70px;font-size:6.75px;color:#6e7176;width:25.80px;text-align:center;letter-spacing:0.5px;text-indent:0.5px;">---</div>
<svg class="a" style="left:846.30px;top:190.83px" width="6" height="6.6" viewBox="0 0 6 6.6"><path d="M1 5.4L4.6 1.1l1 0.8L2 6.1H0.6z" fill="none" stroke="#409eff" stroke-width="0.6"/><path d="M0 6.3h6" stroke="#409eff" stroke-width="0.5"/></svg>
<div class="t" style="left:855.70px;top:192.60px;font-size:6.75px;color:#4a94f0;letter-spacing:1.55px;">编辑</div>
<svg class="a" style="left:878.30px;top:190.93px" width="5.6" height="6.6" viewBox="0 0 5.6 6.6"><rect x="0.8" y="1.6" width="4.4" height="4.6" fill="none" stroke="#409eff" stroke-width="0.6"/><path d="M0 1.4h6M2 1.4V0.4h2v1M2.4 3v2M3.6 3v2" fill="none" stroke="#409eff" stroke-width="0.55"/></svg>
<div class="t" style="left:887.30px;top:192.60px;font-size:6.75px;color:#4a94f0;letter-spacing:1.55px;">删除</div>
<div class="t" style="left:13.50px;top:225.77px;font-size:7.9px;color:#74777c;width:36.50px;text-align:center;">5</div>
<div class="t" style="left:50.00px;top:225.77px;font-size:7.9px;color:#74777c;width:133.50px;text-align:center;">C1-1-301</div>
<div class="a" style="left:183.50px;top:216.95px;width:90.70px;text-align:center;font-size:7.9px;line-height:13.2px;color:#6a6d72">青岛理工大学<span style="letter-spacing:0.6px">---</span>录播系<br><span style="position:relative;left:-1px">统</span></div>
<div class="t" style="left:274.20px;top:225.87px;font-size:7.6px;color:#74777c;width:71.80px;text-align:center;">10.86.51.29</div>
<div class="t" style="left:346.00px;top:225.77px;font-size:7.9px;color:#74777c;width:48.20px;text-align:center;">R6</div>
<div class="a" style="left:403.60px;top:225.61px;width:5.60px;height:5.60px;background:#2f9e4c;border-radius:50%;"></div>
<div class="a" style="left:414.70px;top:225.61px;width:5.60px;height:5.60px;background:#2f9e4c;border-radius:50%;"></div>
<div class="a" style="left:425.80px;top:225.61px;width:5.60px;height:5.60px;background:#2f9e4c;border-radius:50%;"></div>
<div class="t" style="left:446.80px;top:225.57px;font-size:7.9px;color:#8d9095;width:46.70px;text-align:center;letter-spacing:0.6px;">---</div>
<div class="a" style="left:508.60px;top:220.61px;width:44.50px;height:15.40px;background:#67c23a;border-radius:1.8px;"></div>
<div class="t" style="left:508.60px;top:227.28px;font-size:6.75px;color:#fff;width:44.50px;text-align:center;">高级录制</div>
<div class="a" style="left:559.10px;top:220.61px;width:44.40px;height:15.40px;background:#409eff;border-radius:1.8px;"></div>
<div class="t" style="left:559.10px;top:227.28px;font-size:6.75px;color:#fff;width:44.40px;text-align:center;">立即录制</div>
<div class="a" style="left:628.10px;top:220.61px;width:45.00px;height:15.40px;background:#67c23a;border-radius:1.8px;"></div>
<div class="t" style="left:628.10px;top:227.28px;font-size:6.75px;color:#fff;width:45.00px;text-align:center;">资源模式</div>
<div class="t" style="left:683.50px;top:225.30px;font-size:7.9px;color:#606266;width:47.00px;text-align:center;">直播中</div>
<div class="a" style="left:738.30px;top:220.61px;width:33.40px;height:15.40px;background:#f56c6c;border-radius:1.8px;"></div>
<div class="t" style="left:738.30px;top:225.40px;font-size:7.3px;color:#fff;width:33.40px;text-align:center;letter-spacing:1.5px;text-indent:1.5px;">关闭</div>
<div class="a" style="left:791.10px;top:220.61px;width:25.80px;height:15.40px;background:#fff;border-radius:1.8px;border:1px solid #e3e5ea;"></div>
<div class="t" style="left:791.10px;top:227.08px;font-size:6.75px;color:#6e7176;width:25.80px;text-align:center;letter-spacing:0.5px;text-indent:0.5px;">---</div>
<svg class="a" style="left:846.30px;top:225.21px" width="6" height="6.6" viewBox="0 0 6 6.6"><path d="M1 5.4L4.6 1.1l1 0.8L2 6.1H0.6z" fill="none" stroke="#409eff" stroke-width="0.6"/><path d="M0 6.3h6" stroke="#409eff" stroke-width="0.5"/></svg>
<div class="t" style="left:855.70px;top:226.98px;font-size:6.75px;color:#4a94f0;letter-spacing:1.55px;">编辑</div>
<svg class="a" style="left:878.30px;top:225.31px" width="5.6" height="6.6" viewBox="0 0 5.6 6.6"><rect x="0.8" y="1.6" width="4.4" height="4.6" fill="none" stroke="#409eff" stroke-width="0.6"/><path d="M0 1.4h6M2 1.4V0.4h2v1M2.4 3v2M3.6 3v2" fill="none" stroke="#409eff" stroke-width="0.55"/></svg>
<div class="t" style="left:887.30px;top:226.98px;font-size:6.75px;color:#4a94f0;letter-spacing:1.55px;">删除</div>
<div class="t" style="left:13.50px;top:260.15px;font-size:7.9px;color:#74777c;width:36.50px;text-align:center;">6</div>
<div class="t" style="left:50.00px;top:260.15px;font-size:7.9px;color:#74777c;width:133.50px;text-align:center;">C1-1-302</div>
<div class="a" style="left:183.50px;top:251.33px;width:90.70px;text-align:center;font-size:7.9px;line-height:13.2px;color:#6a6d72">青岛理工大学<span style="letter-spacing:0.6px">---</span>录播系<br><span style="position:relative;left:-1px">统</span></div>
<div class="t" style="left:274.20px;top:260.25px;font-size:7.6px;color:#74777c;width:71.80px;text-align:center;">10.86.51.31</div>
<div class="t" style="left:346.00px;top:260.15px;font-size:7.9px;color:#74777c;width:48.20px;text-align:center;">R6</div>
<div class="a" style="left:403.60px;top:259.99px;width:5.60px;height:5.60px;background:#2f9e4c;border-radius:50%;"></div>
<div class="a" style="left:414.70px;top:259.99px;width:5.60px;height:5.60px;background:#2f9e4c;border-radius:50%;"></div>
<div class="a" style="left:425.80px;top:259.99px;width:5.60px;height:5.60px;background:#2f9e4c;border-radius:50%;"></div>
<div class="t" style="left:446.80px;top:259.95px;font-size:7.9px;color:#8d9095;width:46.70px;text-align:center;letter-spacing:0.6px;">---</div>
<div class="a" style="left:508.60px;top:254.99px;width:44.50px;height:15.40px;background:#67c23a;border-radius:1.8px;"></div>
<div class="t" style="left:508.60px;top:261.66px;font-size:6.75px;color:#fff;width:44.50px;text-align:center;">高级录制</div>
<div class="a" style="left:559.10px;top:254.99px;width:44.40px;height:15.40px;background:#409eff;border-radius:1.8px;"></div>
<div class="t" style="left:559.10px;top:261.66px;font-size:6.75px;color:#fff;width:44.40px;text-align:center;">立即录制</div>
<div class="a" style="left:628.10px;top:254.99px;width:45.00px;height:15.40px;background:#67c23a;border-radius:1.8px;"></div>
<div class="t" style="left:628.10px;top:261.66px;font-size:6.75px;color:#fff;width:45.00px;text-align:center;">资源模式</div>
<div class="t" style="left:683.50px;top:259.68px;font-size:7.9px;color:#606266;width:47.00px;text-align:center;">直播中</div>
<div class="a" style="left:738.30px;top:254.99px;width:33.40px;height:15.40px;background:#f56c6c;border-radius:1.8px;"></div>
<div class="t" style="left:738.30px;top:259.78px;font-size:7.3px;color:#fff;width:33.40px;text-align:center;letter-spacing:1.5px;text-indent:1.5px;">关闭</div>
<div class="a" style="left:791.10px;top:254.99px;width:25.80px;height:15.40px;background:#fff;border-radius:1.8px;border:1px solid #e3e5ea;"></div>
<div class="t" style="left:791.10px;top:261.46px;font-size:6.75px;color:#6e7176;width:25.80px;text-align:center;letter-spacing:0.5px;text-indent:0.5px;">---</div>
<svg class="a" style="left:846.30px;top:259.59px" width="6" height="6.6" viewBox="0 0 6 6.6"><path d="M1 5.4L4.6 1.1l1 0.8L2 6.1H0.6z" fill="none" stroke="#409eff" stroke-width="0.6"/><path d="M0 6.3h6" stroke="#409eff" stroke-width="0.5"/></svg>
<div class="t" style="left:855.70px;top:261.36px;font-size:6.75px;color:#4a94f0;letter-spacing:1.55px;">编辑</div>
<svg class="a" style="left:878.30px;top:259.69px" width="5.6" height="6.6" viewBox="0 0 5.6 6.6"><rect x="0.8" y="1.6" width="4.4" height="4.6" fill="none" stroke="#409eff" stroke-width="0.6"/><path d="M0 1.4h6M2 1.4V0.4h2v1M2.4 3v2M3.6 3v2" fill="none" stroke="#409eff" stroke-width="0.55"/></svg>
<div class="t" style="left:887.30px;top:261.36px;font-size:6.75px;color:#4a94f0;letter-spacing:1.55px;">删除</div>
<div class="t" style="left:13.50px;top:294.53px;font-size:7.9px;color:#74777c;width:36.50px;text-align:center;">7</div>
<div class="t" style="left:50.00px;top:294.53px;font-size:7.9px;color:#74777c;width:133.50px;text-align:center;">C1-1-303</div>
<div class="a" style="left:183.50px;top:285.71px;width:90.70px;text-align:center;font-size:7.9px;line-height:13.2px;color:#6a6d72">青岛理工大学<span style="letter-spacing:0.6px">---</span>录播系<br><span style="position:relative;left:-1px">统</span></div>
<div class="t" style="left:274.20px;top:294.63px;font-size:7.6px;color:#74777c;width:71.80px;text-align:center;">10.86.51.33</div>
<div class="t" style="left:346.00px;top:294.53px;font-size:7.9px;color:#74777c;width:48.20px;text-align:center;">R6</div>
<div class="a" style="left:403.60px;top:294.37px;width:5.60px;height:5.60px;background:#2f9e4c;border-radius:50%;"></div>
<div class="a" style="left:414.70px;top:294.37px;width:5.60px;height:5.60px;background:#2f9e4c;border-radius:50%;"></div>
<div class="a" style="left:425.80px;top:294.37px;width:5.60px;height:5.60px;background:#2f9e4c;border-radius:50%;"></div>
<div class="t" style="left:446.80px;top:294.33px;font-size:7.9px;color:#8d9095;width:46.70px;text-align:center;letter-spacing:0.6px;">---</div>
<div class="a" style="left:508.60px;top:289.37px;width:44.50px;height:15.40px;background:#67c23a;border-radius:1.8px;"></div>
<div class="t" style="left:508.60px;top:296.04px;font-size:6.75px;color:#fff;width:44.50px;text-align:center;">高级录制</div>
<div class="a" style="left:559.10px;top:289.37px;width:44.40px;height:15.40px;background:#409eff;border-radius:1.8px;"></div>
<div class="t" style="left:559.10px;top:296.04px;font-size:6.75px;color:#fff;width:44.40px;text-align:center;">立即录制</div>
<div class="a" style="left:628.10px;top:289.37px;width:45.00px;height:15.40px;background:#67c23a;border-radius:1.8px;"></div>
<div class="t" style="left:628.10px;top:296.04px;font-size:6.75px;color:#fff;width:45.00px;text-align:center;">资源模式</div>
<div class="t" style="left:683.50px;top:294.06px;font-size:7.9px;color:#606266;width:47.00px;text-align:center;">直播中</div>
<div class="a" style="left:738.30px;top:289.37px;width:33.40px;height:15.40px;background:#f56c6c;border-radius:1.8px;"></div>
<div class="t" style="left:738.30px;top:294.16px;font-size:7.3px;color:#fff;width:33.40px;text-align:center;letter-spacing:1.5px;text-indent:1.5px;">关闭</div>
<div class="a" style="left:791.10px;top:289.37px;width:25.80px;height:15.40px;background:#fff;border-radius:1.8px;border:1px solid #e3e5ea;"></div>
<div class="t" style="left:791.10px;top:295.84px;font-size:6.75px;color:#6e7176;width:25.80px;text-align:center;letter-spacing:0.5px;text-indent:0.5px;">---</div>
<svg class="a" style="left:846.30px;top:293.97px" width="6" height="6.6" viewBox="0 0 6 6.6"><path d="M1 5.4L4.6 1.1l1 0.8L2 6.1H0.6z" fill="none" stroke="#409eff" stroke-width="0.6"/><path d="M0 6.3h6" stroke="#409eff" stroke-width="0.5"/></svg>
<div class="t" style="left:855.70px;top:295.74px;font-size:6.75px;color:#4a94f0;letter-spacing:1.55px;">编辑</div>
<svg class="a" style="left:878.30px;top:294.07px" width="5.6" height="6.6" viewBox="0 0 5.6 6.6"><rect x="0.8" y="1.6" width="4.4" height="4.6" fill="none" stroke="#409eff" stroke-width="0.6"/><path d="M0 1.4h6M2 1.4V0.4h2v1M2.4 3v2M3.6 3v2" fill="none" stroke="#409eff" stroke-width="0.55"/></svg>
<div class="t" style="left:887.30px;top:295.74px;font-size:6.75px;color:#4a94f0;letter-spacing:1.55px;">删除</div>
<div class="t" style="left:13.50px;top:328.91px;font-size:7.9px;color:#74777c;width:36.50px;text-align:center;">8</div>
<div class="t" style="left:50.00px;top:328.91px;font-size:7.9px;color:#74777c;width:133.50px;text-align:center;">C1-1-311</div>
<div class="a" style="left:183.50px;top:320.09px;width:90.70px;text-align:center;font-size:7.9px;line-height:13.2px;color:#6a6d72">青岛理工大学<span style="letter-spacing:0.6px">---</span>录播系<br><span style="position:relative;left:-1px">统</span></div>
<div class="t" style="left:274.20px;top:329.01px;font-size:7.6px;color:#74777c;width:71.80px;text-align:center;">10.86.51.35</div>
<div class="t" style="left:346.00px;top:328.91px;font-size:7.9px;color:#74777c;width:48.20px;text-align:center;">R6</div>
<div class="a" style="left:403.60px;top:328.75px;width:5.60px;height:5.60px;background:#2f9e4c;border-radius:50%;"></div>
<div class="a" style="left:414.70px;top:328.75px;width:5.60px;height:5.60px;background:#2f9e4c;border-radius:50%;"></div>
<div class="a" style="left:425.80px;top:328.75px;width:5.60px;height:5.60px;background:#2f9e4c;border-radius:50%;"></div>
<div class="t" style="left:446.80px;top:328.71px;font-size:7.9px;color:#8d9095;width:46.70px;text-align:center;letter-spacing:0.6px;">---</div>
<div class="a" style="left:508.60px;top:323.75px;width:44.50px;height:15.40px;background:#67c23a;border-radius:1.8px;"></div>
<div class="t" style="left:508.60px;top:330.42px;font-size:6.75px;color:#fff;width:44.50px;text-align:center;">高级录制</div>
<div class="a" style="left:559.10px;top:323.75px;width:44.40px;height:15.40px;background:#409eff;border-radius:1.8px;"></div>
<div class="t" style="left:559.10px;top:330.42px;font-size:6.75px;color:#fff;width:44.40px;text-align:center;">立即录制</div>
<div class="a" style="left:628.10px;top:323.75px;width:45.00px;height:15.40px;background:#67c23a;border-radius:1.8px;"></div>
<div class="t" style="left:628.10px;top:330.42px;font-size:6.75px;color:#fff;width:45.00px;text-align:center;">资源模式</div>
<div class="t" style="left:683.50px;top:328.44px;font-size:7.9px;color:#606266;width:47.00px;text-align:center;">直播中</div>
<div class="a" style="left:738.30px;top:323.75px;width:33.40px;height:15.40px;background:#f56c6c;border-radius:1.8px;"></div>
<div class="t" style="left:738.30px;top:328.54px;font-size:7.3px;color:#fff;width:33.40px;text-align:center;letter-spacing:1.5px;text-indent:1.5px;">关闭</div>
<div class="a" style="left:791.10px;top:323.75px;width:25.80px;height:15.40px;background:#fff;border-radius:1.8px;border:1px solid #e3e5ea;"></div>
<div class="t" style="left:791.10px;top:330.22px;font-size:6.75px;color:#6e7176;width:25.80px;text-align:center;letter-spacing:0.5px;text-indent:0.5px;">---</div>
<svg class="a" style="left:846.30px;top:328.35px" width="6" height="6.6" viewBox="0 0 6 6.6"><path d="M1 5.4L4.6 1.1l1 0.8L2 6.1H0.6z" fill="none" stroke="#409eff" stroke-width="0.6"/><path d="M0 6.3h6" stroke="#409eff" stroke-width="0.5"/></svg>
<div class="t" style="left:855.70px;top:330.12px;font-size:6.75px;color:#4a94f0;letter-spacing:1.55px;">编辑</div>
<svg class="a" style="left:878.30px;top:328.45px" width="5.6" height="6.6" viewBox="0 0 5.6 6.6"><rect x="0.8" y="1.6" width="4.4" height="4.6" fill="none" stroke="#409eff" stroke-width="0.6"/><path d="M0 1.4h6M2 1.4V0.4h2v1M2.4 3v2M3.6 3v2" fill="none" stroke="#409eff" stroke-width="0.55"/></svg>
<div class="t" style="left:887.30px;top:330.12px;font-size:6.75px;color:#4a94f0;letter-spacing:1.55px;">删除</div>
<div class="t" style="left:13.50px;top:363.29px;font-size:7.9px;color:#74777c;width:36.50px;text-align:center;">9</div>
<div class="t" style="left:50.00px;top:363.29px;font-size:7.9px;color:#74777c;width:133.50px;text-align:center;">C1-1-312</div>
<div class="a" style="left:183.50px;top:354.47px;width:90.70px;text-align:center;font-size:7.9px;line-height:13.2px;color:#6a6d72">青岛理工大学<span style="letter-spacing:0.6px">---</span>录播系<br><span style="position:relative;left:-1px">统</span></div>
<div class="t" style="left:274.20px;top:363.39px;font-size:7.6px;color:#74777c;width:71.80px;text-align:center;">10.86.51.37</div>
<div class="t" style="left:346.00px;top:363.29px;font-size:7.9px;color:#74777c;width:48.20px;text-align:center;">R6</div>
<div class="a" style="left:403.60px;top:363.13px;width:5.60px;height:5.60px;background:#2f9e4c;border-radius:50%;"></div>
<div class="a" style="left:414.70px;top:363.13px;width:5.60px;height:5.60px;background:#2f9e4c;border-radius:50%;"></div>
<div class="a" style="left:425.80px;top:363.13px;width:5.60px;height:5.60px;background:#2f9e4c;border-radius:50%;"></div>
<div class="t" style="left:446.80px;top:363.09px;font-size:7.9px;color:#8d9095;width:46.70px;text-align:center;letter-spacing:0.6px;">---</div>
<div class="a" style="left:508.60px;top:358.13px;width:44.50px;height:15.40px;background:#67c23a;border-radius:1.8px;"></div>
<div class="t" style="left:508.60px;top:364.80px;font-size:6.75px;color:#fff;width:44.50px;text-align:center;">高级录制</div>
<div class="a" style="left:559.10px;top:358.13px;width:44.40px;height:15.40px;background:#409eff;border-radius:1.8px;"></div>
<div class="t" style="left:559.10px;top:364.80px;font-size:6.75px;color:#fff;width:44.40px;text-align:center;">立即录制</div>
<div class="a" style="left:628.10px;top:358.13px;width:45.00px;height:15.40px;background:#67c23a;border-radius:1.8px;"></div>
<div class="t" style="left:628.10px;top:364.80px;font-size:6.75px;color:#fff;width:45.00px;text-align:center;">资源模式</div>
<div class="t" style="left:683.50px;top:362.82px;font-size:7.9px;color:#606266;width:47.00px;text-align:center;">直播中</div>
<div class="a" style="left:738.30px;top:358.13px;width:33.40px;height:15.40px;background:#f56c6c;border-radius:1.8px;"></div>
<div class="t" style="left:738.30px;top:362.92px;font-size:7.3px;color:#fff;width:33.40px;text-align:center;letter-spacing:1.5px;text-indent:1.5px;">关闭</div>
<div class="a" style="left:791.10px;top:358.13px;width:25.80px;height:15.40px;background:#fff;border-radius:1.8px;border:1px solid #e3e5ea;"></div>
<div class="t" style="left:791.10px;top:364.60px;font-size:6.75px;color:#6e7176;width:25.80px;text-align:center;letter-spacing:0.5px;text-indent:0.5px;">---</div>
<svg class="a" style="left:846.30px;top:362.73px" width="6" height="6.6" viewBox="0 0 6 6.6"><path d="M1 5.4L4.6 1.1l1 0.8L2 6.1H0.6z" fill="none" stroke="#409eff" stroke-width="0.6"/><path d="M0 6.3h6" stroke="#409eff" stroke-width="0.5"/></svg>
<div class="t" style="left:855.70px;top:364.50px;font-size:6.75px;color:#4a94f0;letter-spacing:1.55px;">编辑</div>
<svg class="a" style="left:878.30px;top:362.83px" width="5.6" height="6.6" viewBox="0 0 5.6 6.6"><rect x="0.8" y="1.6" width="4.4" height="4.6" fill="none" stroke="#409eff" stroke-width="0.6"/><path d="M0 1.4h6M2 1.4V0.4h2v1M2.4 3v2M3.6 3v2" fill="none" stroke="#409eff" stroke-width="0.55"/></svg>
<div class="t" style="left:887.30px;top:364.50px;font-size:6.75px;color:#4a94f0;letter-spacing:1.55px;">删除</div>
<div class="t" style="left:13.50px;top:397.67px;font-size:7.9px;color:#74777c;width:36.50px;text-align:center;">10</div>
<div class="t" style="left:50.00px;top:397.67px;font-size:7.9px;color:#74777c;width:133.50px;text-align:center;">C1-1-401</div>
<div class="a" style="left:183.50px;top:388.85px;width:90.70px;text-align:center;font-size:7.9px;line-height:13.2px;color:#6a6d72">青岛理工大学<span style="letter-spacing:0.6px">---</span>录播系<br><span style="position:relative;left:-1px">统</span></div>
<div class="t" style="left:274.20px;top:397.77px;font-size:7.6px;color:#74777c;width:71.80px;text-align:center;">10.86.51.39</div>
<div class="t" style="left:346.00px;top:397.67px;font-size:7.9px;color:#74777c;width:48.20px;text-align:center;">R6</div>
<div class="a" style="left:403.60px;top:397.51px;width:5.60px;height:5.60px;background:#2f9e4c;border-radius:50%;"></div>
<div class="a" style="left:414.70px;top:397.51px;width:5.60px;height:5.60px;background:#2f9e4c;border-radius:50%;"></div>
<div class="a" style="left:425.80px;top:397.51px;width:5.60px;height:5.60px;background:#2f9e4c;border-radius:50%;"></div>
<div class="t" style="left:446.80px;top:397.47px;font-size:7.9px;color:#8d9095;width:46.70px;text-align:center;letter-spacing:0.6px;">---</div>
<div class="a" style="left:508.60px;top:392.51px;width:44.50px;height:15.40px;background:#67c23a;border-radius:1.8px;"></div>
<div class="t" style="left:508.60px;top:399.18px;font-size:6.75px;color:#fff;width:44.50px;text-align:center;">高级录制</div>
<div class="a" style="left:559.10px;top:392.51px;width:44.40px;height:15.40px;background:#409eff;border-radius:1.8px;"></div>
<div class="t" style="left:559.10px;top:399.18px;font-size:6.75px;color:#fff;width:44.40px;text-align:center;">立即录制</div>
<div class="a" style="left:628.10px;top:392.51px;width:45.00px;height:15.40px;background:#67c23a;border-radius:1.8px;"></div>
<div class="t" style="left:628.10px;top:399.18px;font-size:6.75px;color:#fff;width:45.00px;text-align:center;">资源模式</div>
<div class="t" style="left:683.50px;top:397.20px;font-size:7.9px;color:#606266;width:47.00px;text-align:center;">直播中</div>
<div class="a" style="left:738.30px;top:392.51px;width:33.40px;height:15.40px;background:#f56c6c;border-radius:1.8px;"></div>
<div class="t" style="left:738.30px;top:397.30px;font-size:7.3px;color:#fff;width:33.40px;text-align:center;letter-spacing:1.5px;text-indent:1.5px;">关闭</div>
<div class="a" style="left:791.10px;top:392.51px;width:25.80px;height:15.40px;background:#fff;border-radius:1.8px;border:1px solid #e3e5ea;"></div>
<div class="t" style="left:791.10px;top:398.98px;font-size:6.75px;color:#6e7176;width:25.80px;text-align:center;letter-spacing:0.5px;text-indent:0.5px;">---</div>
<svg class="a" style="left:846.30px;top:397.11px" width="6" height="6.6" viewBox="0 0 6 6.6"><path d="M1 5.4L4.6 1.1l1 0.8L2 6.1H0.6z" fill="none" stroke="#409eff" stroke-width="0.6"/><path d="M0 6.3h6" stroke="#409eff" stroke-width="0.5"/></svg>
<div class="t" style="left:855.70px;top:398.88px;font-size:6.75px;color:#4a94f0;letter-spacing:1.55px;">编辑</div>
<svg class="a" style="left:878.30px;top:397.21px" width="5.6" height="6.6" viewBox="0 0 5.6 6.6"><rect x="0.8" y="1.6" width="4.4" height="4.6" fill="none" stroke="#409eff" stroke-width="0.6"/><path d="M0 1.4h6M2 1.4V0.4h2v1M2.4 3v2M3.6 3v2" fill="none" stroke="#409eff" stroke-width="0.55"/></svg>
<div class="t" style="left:887.30px;top:398.88px;font-size:6.75px;color:#4a94f0;letter-spacing:1.55px;">删除</div>
</div>
<div class="t" style="left:778.10px;top:517.96px;font-size:7.7px;color:#606266;">共 29 条</div>
<div class="a" style="left:813.70px;top:514.00px;width:54.70px;height:14.60px;background:#fff;border:1px solid #e2e4ea;border-radius:2px;"></div>
<div class="t" style="left:823.70px;top:518.02px;font-size:7.5px;color:#606266;">10条/页</div>
<svg class="a" style="left:859.80px;top:520.20px" width="5" height="3" viewBox="0 0 5 3"><path d="M0.3 0.5L2.5 2.5 4.7 0.5" fill="none" stroke="#c0c4cc" stroke-width="0.6"/></svg>
<div class="a" style="left:880.30px;top:514.00px;width:16.60px;height:15.00px;background:#f4f4f5;border-radius:1.5px;"></div>
<svg class="a" style="left:886.90px;top:518.50px" width="4" height="6" viewBox="0 0 4 6"><path d="M3 0.5L0.8 3 3 5.5" fill="none" stroke="#c0c4cc" stroke-width="0.75"/></svg>
<div class="a" style="left:903.00px;top:514.00px;width:16.60px;height:15.00px;background:#409eff;border-radius:1.5px;"></div>
<div class="t" style="left:903.00px;top:517.76px;font-size:7.6px;color:#fff;width:16.60px;text-align:center;-webkit-text-stroke:0.2px #fff;">1</div>
<div class="a" style="left:925.50px;top:514.00px;width:16.60px;height:15.00px;background:#f4f4f5;border-radius:1.5px;"></div>
<div class="t" style="left:925.50px;top:517.76px;font-size:7.6px;color:#303133;width:16.60px;text-align:center;-webkit-text-stroke:0.2px #303133;">2</div>
<div class="a" style="left:947.80px;top:514.00px;width:16.60px;height:15.00px;background:#f4f4f5;border-radius:1.5px;"></div>
<div class="t" style="left:947.80px;top:517.76px;font-size:7.6px;color:#303133;width:16.60px;text-align:center;-webkit-text-stroke:0.2px #303133;">3</div>
<div class="a" style="left:970.20px;top:514.00px;width:16.60px;height:15.00px;background:#f4f4f5;border-radius:1.5px;"></div>
<svg class="a" style="left:976.80px;top:518.50px" width="4" height="6" viewBox="0 0 4 6"><path d="M0.8 0.5L3 3 0.8 5.5" fill="none" stroke="#303133" stroke-width="0.75"/></svg>
<div class="t" style="left:1003.50px;top:517.96px;font-size:7.7px;color:#606266;">前往</div>
<div class="a" style="left:1020.70px;top:513.60px;width:24.80px;height:14.80px;background:#fff;border:1px solid #e2e4ea;border-radius:2px;"></div>
<div class="t" style="left:1020.70px;top:517.80px;font-size:7.5px;color:#606266;width:24.80px;text-align:center;">1</div>
<div class="t" style="left:1048.00px;top:517.96px;font-size:7.7px;color:#606266;">页</div>
</body></html>
